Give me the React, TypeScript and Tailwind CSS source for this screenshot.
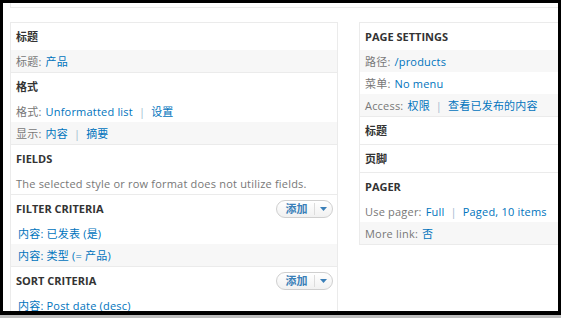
import React from 'react';

const font = { fontFamily: '"Open Sans", "Noto Sans CJK SC", sans-serif' };

const Sep = () => <span className="mx-[6px] text-[#9fb8cf]">|</span>;

const Label: React.FC<{ children: React.ReactNode }> = ({ children }) => (
  <span className="text-[#777] mr-[4px]">{children}</span>
);

const A: React.FC<{ children: React.ReactNode }> = ({ children }) => (
  <span className="text-[#0074bd]">{children}</span>
);

const Row: React.FC<{ gray?: boolean; indent?: boolean; children: React.ReactNode }> = ({ gray, indent, children }) => (
  <div
    className={`h-[22px] flex items-center whitespace-nowrap tracking-[0.2px] ${indent ? 'pl-[7px]' : 'pl-[5px]'} ${gray ? 'bg-[#f7f7f7]' : ''}`}
  >
    {children}
  </div>
);

const AddButton = () => (
  <div className="h-[18px] w-[57px] mr-[4px] rounded-full border border-[#cfcfcf] bg-gradient-to-b from-white to-[#f1f1f1] flex items-center">
    <span className="flex-1 text-center text-[#3a7fb8] text-[11px] pl-[2px]">添加</span>
    <span className="h-[12px] w-px bg-[#dcdcdc]" />
    <span className="w-[17px] flex justify-center">
      <svg width="7" height="4" viewBox="0 0 7 4">
        <path d="M0 0h7L3.5 4z" fill="#3a7fb8" />
      </svg>
    </span>
  </div>
);

const Heading: React.FC<{ children: React.ReactNode; button?: boolean }> = ({ children, button }) => (
  <div className="h-[27px] flex items-center justify-between pl-[5px] font-bold text-[#333]">
    <span>{children}</span>
    {button && <AddButton />}
  </div>
);

const Section: React.FC<{ first?: boolean; children: React.ReactNode }> = ({ first, children }) => (
  <div className={first ? '' : 'border-t border-[#ebebeb]'}>{children}</div>
);

export default function App() {
  return (
    <div className="w-[564px] h-[318px] bg-white overflow-hidden text-[11px] leading-none" style={font}>
      <div className="w-[561px] h-[315px] border-black border-t-[3px] border-l-[3px] border-r-[3px] border-b-[4px] bg-white overflow-hidden">
        <div className="ml-[7px] h-[5px] border-l border-b border-[#ececec]" />
        <div className="flex items-start gap-[21px] pl-[7px] pt-[14px]">
          {/* Left column */}
          <div className="w-[328px] shrink-0 border border-[#ebebeb] border-b-0">
            <Section first>
              <Heading>标题</Heading>
              <Row gray>
                <Label>标题:</Label>
                <A>产品</A>
              </Row>
            </Section>
            <Section>
              <Heading>格式</Heading>
              <Row>
                <Label>格式:</Label>
                <A>Unformatted list</A>
                <Sep />
                <A>设置</A>
              </Row>
              <Row gray>
                <Label>显示:</Label>
                <A>内容</A>
                <Sep />
                <A>摘要</A>
              </Row>
            </Section>
            <Section>
              <Heading>FIELDS</Heading>
              <Row>
                <span className="text-[#777]">The selected style or row format does not utilize fields.</span>
              </Row>
            </Section>
            <Section>
              <Heading button>FILTER CRITERIA</Heading>
              <Row indent>
                <A>内容: 已发表 (是)</A>
              </Row>
              <Row gray indent>
                <A>内容: 类型 (= 产品)</A>
              </Row>
            </Section>
            <Section>
              <Heading button>SORT CRITERIA</Heading>
              <Row indent>
                <A>内容: Post date (desc)</A>
              </Row>
            </Section>
          </div>

          {/* Right column */}
          <div className="w-[260px] shrink-0 border border-[#ebebeb]">
            <Section first>
              <Heading>PAGE SETTINGS</Heading>
              <Row gray>
                <Label>路径:</Label>
                <A>/products</A>
              </Row>
              <Row>
                <Label>菜单:</Label>
                <A>No menu</A>
              </Row>
              <Row gray>
                <Label>Access:</Label>
                <A>权限</A>
                <Sep />
                <A>查看已发布的内容</A>
              </Row>
            </Section>
            <Section>
              <Heading>标题</Heading>
            </Section>
            <Section>
              <Heading>页脚</Heading>
            </Section>
            <Section>
              <Heading>PAGER</Heading>
              <Row>
                <Label>Use pager:</Label>
                <A>Full</A>
                <Sep />
                <A>Paged, 10 items</A>
              </Row>
              <Row gray>
                <Label>More link:</Label>
                <A>否</A>
              </Row>
            </Section>
          </div>
        </div>
      </div>
      <div className="w-[561px] h-[3px] bg-[#bdbdbd]" />
    </div>
  );
}
